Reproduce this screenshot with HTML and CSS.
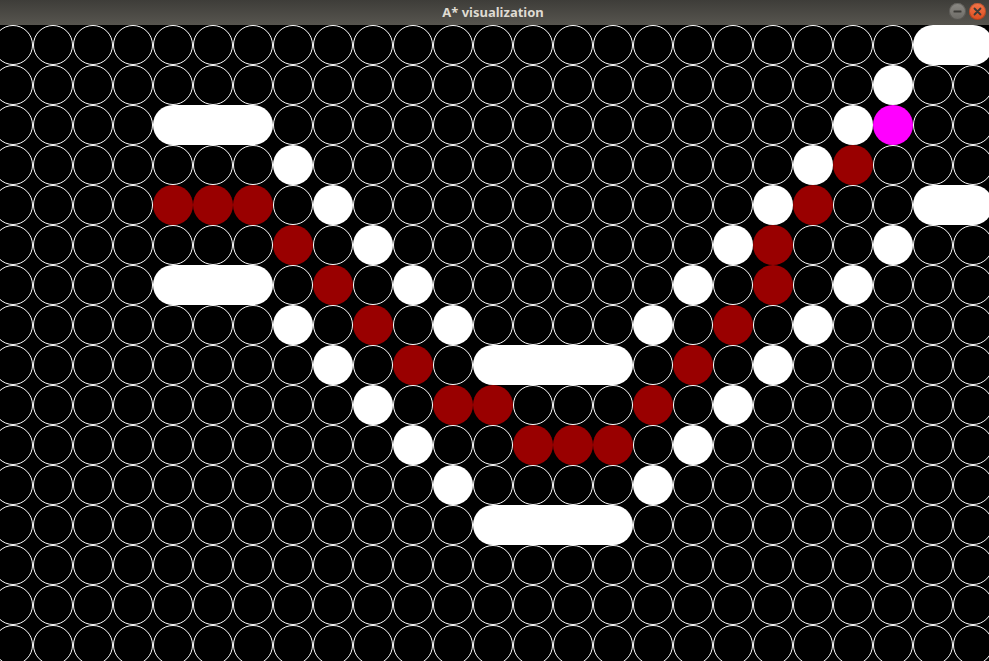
FILE: index.html
```html
<!DOCTYPE html>
<html>
<head>
<meta charset="utf-8">
<title>A* visualization</title>
<link rel="stylesheet" href="styles.css">
</head>
<body class="page">
<div class="window">
  <header class="titlebar">
    <div class="tb-side"></div>
    <div class="tb-title">A* visualization</div>
    <div class="tb-side tb-buttons">
      <span class="btn btn-min"><svg width="17" height="17" viewBox="0 0 17 17"><rect x="4.5" y="7.5" width="8" height="2" rx="0.5" fill="#3c3b37"/></svg></span>
      <span class="btn btn-close"><svg width="17" height="17" viewBox="0 0 17 17"><path d="M5.5 5.5 L11.5 11.5 M11.5 5.5 L5.5 11.5" stroke="#3c3b37" stroke-width="1.8" stroke-linecap="round"/></svg></span>
    </div>
  </header>
  <main class="board">
<!-- row 0 -->
<i></i><i></i><i></i><i></i><i></i><i></i><i></i><i></i><i></i><i></i><i></i><i></i><i></i><i></i><i></i><i></i><i></i><i></i><i></i><i></i><i></i><i></i><i></i><i class="p s2"></i>
<!-- row 1 -->
<i></i><i></i><i></i><i></i><i></i><i></i><i></i><i></i><i></i><i></i><i></i><i></i><i></i><i></i><i></i><i></i><i></i><i></i><i></i><i></i><i></i><i></i><i class="w"></i><i></i><i></i>
<!-- row 2 -->
<i></i><i></i><i></i><i></i><i class="p s3"></i><i></i><i></i><i></i><i></i><i></i><i></i><i></i><i></i><i></i><i></i><i></i><i></i><i></i><i></i><i class="w"></i><i class="m"></i><i></i><i></i>
<!-- row 3 -->
<i></i><i></i><i></i><i></i><i></i><i></i><i></i><i class="w"></i><i></i><i></i><i></i><i></i><i></i><i></i><i></i><i></i><i></i><i></i><i></i><i></i><i class="w"></i><i class="r"></i><i></i><i></i><i></i>
<!-- row 4 -->
<i></i><i></i><i></i><i></i><i class="r"></i><i class="r"></i><i class="r"></i><i></i><i class="w"></i><i></i><i></i><i></i><i></i><i></i><i></i><i></i><i></i><i></i><i></i><i class="w"></i><i class="r"></i><i></i><i></i><i class="p s2"></i>
<!-- row 5 -->
<i></i><i></i><i></i><i></i><i></i><i></i><i></i><i class="r"></i><i></i><i class="w"></i><i></i><i></i><i></i><i></i><i></i><i></i><i></i><i></i><i class="w"></i><i class="r"></i><i></i><i></i><i class="w"></i><i></i><i></i>
<!-- row 6 -->
<i></i><i></i><i></i><i></i><i class="p s3"></i><i></i><i class="r"></i><i></i><i class="w"></i><i></i><i></i><i></i><i></i><i></i><i></i><i class="w"></i><i></i><i class="r"></i><i></i><i class="w"></i><i></i><i></i><i></i>
<!-- row 7 -->
<i></i><i></i><i></i><i></i><i></i><i></i><i></i><i class="w"></i><i></i><i class="r"></i><i></i><i class="w"></i><i></i><i></i><i></i><i></i><i class="w"></i><i></i><i class="r"></i><i></i><i class="w"></i><i></i><i></i><i></i><i></i>
<!-- row 8 -->
<i></i><i></i><i></i><i></i><i></i><i></i><i></i><i></i><i class="w"></i><i></i><i class="r"></i><i></i><i class="p s4"></i><i></i><i class="r"></i><i></i><i class="w"></i><i></i><i></i><i></i><i></i><i></i>
<!-- row 9 -->
<i></i><i></i><i></i><i></i><i></i><i></i><i></i><i></i><i></i><i class="w"></i><i></i><i class="r"></i><i class="r"></i><i></i><i></i><i></i><i class="r"></i><i></i><i class="w"></i><i></i><i></i><i></i><i></i><i></i><i></i>
<!-- row 10 -->
<i></i><i></i><i></i><i></i><i></i><i></i><i></i><i></i><i></i><i></i><i class="w"></i><i></i><i></i><i class="r"></i><i class="r"></i><i class="r"></i><i></i><i class="w"></i><i></i><i></i><i></i><i></i><i></i><i></i><i></i>
<!-- row 11 -->
<i></i><i></i><i></i><i></i><i></i><i></i><i></i><i></i><i></i><i></i><i></i><i class="w"></i><i></i><i></i><i></i><i></i><i class="w"></i><i></i><i></i><i></i><i></i><i></i><i></i><i></i><i></i>
<!-- row 12 -->
<i></i><i></i><i></i><i></i><i></i><i></i><i></i><i></i><i></i><i></i><i></i><i></i><i class="p s4"></i><i></i><i></i><i></i><i></i><i></i><i></i><i></i><i></i><i></i>
<!-- row 13 -->
<i></i><i></i><i></i><i></i><i></i><i></i><i></i><i></i><i></i><i></i><i></i><i></i><i></i><i></i><i></i><i></i><i></i><i></i><i></i><i></i><i></i><i></i><i></i><i></i><i></i>
<!-- row 14 -->
<i></i><i></i><i></i><i></i><i></i><i></i><i></i><i></i><i></i><i></i><i></i><i></i><i></i><i></i><i></i><i></i><i></i><i></i><i></i><i></i><i></i><i></i><i></i><i></i><i></i>
<!-- row 15 -->
<i></i><i></i><i></i><i></i><i></i><i></i><i></i><i></i><i></i><i></i><i></i><i></i><i></i><i></i><i></i><i></i><i></i><i></i><i></i><i></i><i></i><i></i><i></i><i></i><i></i>
  </main>
</div>
</body>
</html>
```
FILE: styles.css
```css
html, body.page {
  margin: 0;
  padding: 0;
  width: 989px;
  height: 661px;
  overflow: hidden;
  background: #000;
}
.window {
  width: 989px;
  height: 661px;
  overflow: hidden;
  display: flex;
  flex-direction: column;
}
.titlebar {
  flex: 0 0 25px;
  height: 25px;
  display: grid;
  grid-template-columns: 1fr auto 1fr;
  align-items: center;
  background: linear-gradient(#3e3d39, #57554f);
}
.tb-title {
  font-family: "Noto Sans", "DejaVu Sans", sans-serif;
  font-weight: bold;
  font-size: 13px;
  color: #dfdbd2;
  line-height: 25px;
  letter-spacing: 0;
  margin-left: -3px;
}
.tb-buttons {
  display: flex;
  justify-content: flex-end;
  align-items: center;
  gap: 3px;
  padding-right: 3px;
  margin-top: -3px;
}
.btn {
  width: 17px;
  height: 17px;
  border-radius: 50%;
  display: block;
}
.btn svg { display: block; }
.btn-min {
  background: linear-gradient(#8c8a85, #6c6a65);
  box-shadow: inset 0 0 0 1px rgba(40,40,36,0.35);
}
.btn-close {
  background: linear-gradient(#f4764a, #dc4d1f);
  box-shadow: inset 0 0 0 1px rgba(90,30,10,0.3);
}
.board {
  display: grid;
  grid-template-columns: repeat(25, 40px);
  grid-template-rows: repeat(16, 40px);
  margin-left: -7px;
  width: 1000px;
}
.board > i {
  display: block;
  width: 40px;
  height: 40px;
  box-sizing: border-box;
  border: 1px solid #fff;
  border-radius: 50%;
}
.board > i.w {
  background: #fff;
  border: none;
}
.board > i.r {
  background: #990000;
  border: none;
}
.board > i.m {
  background: #ff00ff;
  border: none;
}
.board > i.p {
  background: #fff;
  border: none;
  border-radius: 20px;
  width: auto;
}
.board > i.s2 { grid-column: span 2; }
.board > i.s3 { grid-column: span 3; }
.board > i.s4 { grid-column: span 4; }
```
